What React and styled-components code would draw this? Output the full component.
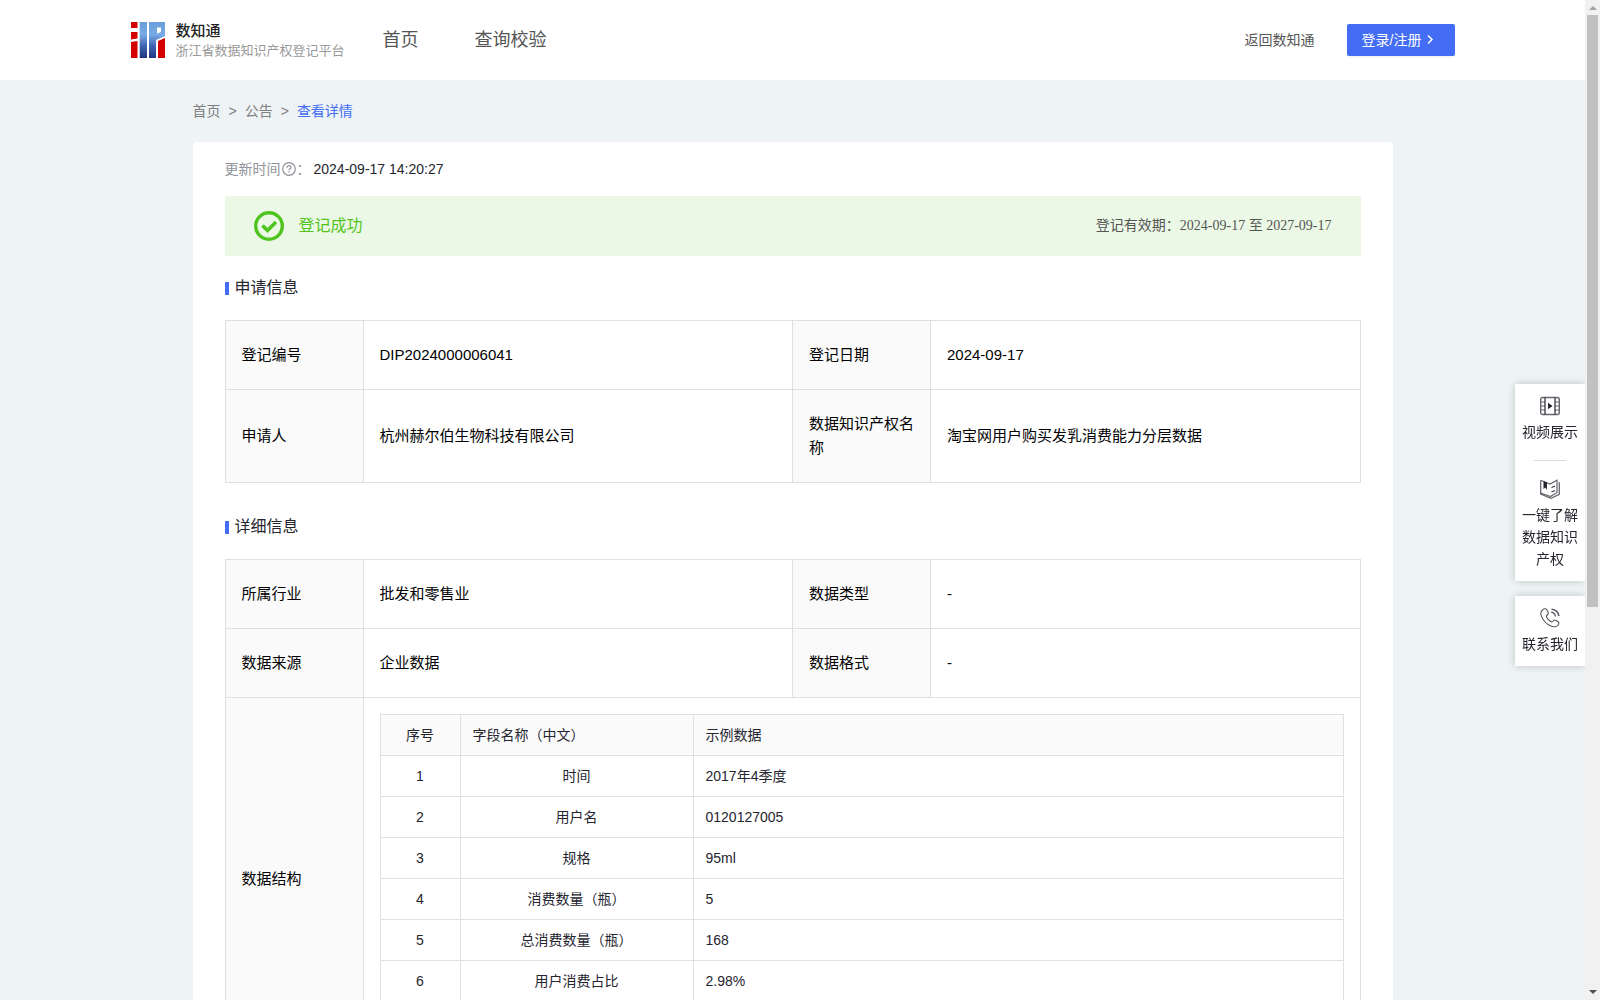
import React from "react";
import styled, { createGlobalStyle } from "styled-components";

const crumbs = ["首页", "公告"];

const applyRows = [
  ["登记编号", "DIP2024000006041", "登记日期", "2024-09-17"],
  ["申请人", "杭州赫尔伯生物科技有限公司", "数据知识产权名称", "淘宝网用户购买发乳消费能力分层数据"],
];

const detailRows = [
  ["所属行业", "批发和零售业", "数据类型", "-"],
  ["数据来源", "企业数据", "数据格式", "-"],
];

const fields = [
  { id: 1, name: "时间", sample: "2017年4季度" },
  { id: 2, name: "用户名", sample: "0120127005" },
  { id: 3, name: "规格", sample: "95ml" },
  { id: 4, name: "消费数量（瓶）", sample: "5" },
  { id: 5, name: "总消费数量（瓶）", sample: "168" },
  { id: 6, name: "用户消费占比", sample: "2.98%" },
];

function Logo() {
  return (
    <svg width="34" height="36" viewBox="0 0 34 36" aria-hidden="true">
      <defs>
        <linearGradient id="logoBlue" x1="0" y1="0" x2="0" y2="36" gradientUnits="userSpaceOnUse">
          <stop offset="0" stopColor="#6a9edb" />
          <stop offset="0.35" stopColor="#78abe4" />
          <stop offset="0.65" stopColor="#3f66b4" />
          <stop offset="1" stopColor="#22347f" />
        </linearGradient>
      </defs>
      <path d="M0 0h6.500v6H0zM0 10h6.500v6.500L0 17.500zM0 20l6.500-1v17H0zM27 19l7-3v20h-7z" fill="#d40000" />
      <path d="M8.700 0h7.300v36H8.700z" fill="url(#logoBlue)" />
      <path
        d="M18 0h16v14l-9 4v18h-7zM26 5.500v6l4-1.500V5.500z"
        fill="url(#logoBlue)"
        fillRule="evenodd"
      />
    </svg>
  );
}

function VideoIcon() {
  return (
    <svg width="20" height="20" viewBox="0 0 20 20" fill="none" stroke="#66666e" aria-hidden="true">
      <rect x="0.700" y="1.500" width="18.600" height="17" rx="2" strokeWidth="1.400" />
      <path d="M.7 6H5M.7 10H5M.7 14H5M15 6h4.300M15 10h4.300M15 14h4.300" strokeWidth="1.200" />
      <path d="M5 1.500v17M15 1.500v17" stroke="#35353e" strokeWidth="1.300" />
      <path d="M8 6.700v6.600l4.600-3.300z" fill="#25252f" stroke="none" />
    </svg>
  );
}

function BookIcon() {
  return (
    <svg width="20" height="20" viewBox="0 0 20 20" fill="none" stroke="#66666e" aria-hidden="true">
      <path d="M.7 1.500v13.500l10.300 4.300 8.300-4V3.200" strokeWidth="1.300" />
      <path d="M.7 1.200l9.300 3.800 7-3.800v12.300l-6.500 4L.7 14" strokeWidth="1.200" />
      <path d="M3.500 2v8l2-1.500 1.500 2.500V3.500z" fill="#25252f" stroke="none" />
      <path d="M11.500 8.500l3.500-1.500M11.500 13l3.500-1.500" stroke="#35353e" strokeWidth="1.200" />
    </svg>
  );
}

function PhoneIcon() {
  return (
    <svg width="20" height="20" viewBox="0 0 20 20" fill="none" stroke="#55555e" strokeLinejoin="round" aria-hidden="true">
      <path
        d="M3.300 1.300c1.500-1 3-.5 3.700.7l1 2c.6 1.300.2 2.300-.8 3-.9.700-1 1.400-.4 2.500 1 1.800 2.200 3 3.900 4 1 .6 1.700.4 2.400-.5.700-1 1.700-1.300 2.900-.6l1.800 1.100c1.200.8 1.400 2.200.4 3.500-1.600 2-4 2.200-6.600 1.200C6.800 16.400 2.800 12.300 1.200 7.600.3 4.900 1 2.700 3.300 1.300z"
        strokeWidth="1.100"
      />
      <path d="M11.200 4.200c2.600.3 4 1.900 4.300 4.300" strokeWidth="1.300" />
      <path d="M11.500 1.200c4.300.3 6.800 2.800 7.300 6.800" strokeWidth="1.600" />
    </svg>
  );
}

function InfoTable({ label, rows, children }) {
  return (
    <Table aria-label={label}>
      <colgroup>
        <LabelCol />
        <col />
        <LabelCol />
        <col />
      </colgroup>
      <tbody>
        {rows.map(([nameA, valueA, nameB, valueB]) => (
          <tr key={nameA}>
            <LabelCell scope="row">{nameA}</LabelCell>
            <ValueCell>{valueA}</ValueCell>
            <LabelCell scope="row">{nameB}</LabelCell>
            <ValueCell>{valueB}</ValueCell>
          </tr>
        ))}
        {children}
      </tbody>
    </Table>
  );
}

function FieldTable() {
  return (
    <Fields>
      <colgroup>
        <FieldCol $width="80px" />
        <FieldCol $width="233px" />
        <col />
      </colgroup>
      <thead>
        <tr>
          <FieldHead $center>序号</FieldHead>
          <FieldHead>字段名称（中文）</FieldHead>
          <FieldHead>示例数据</FieldHead>
        </tr>
      </thead>
      <tbody>
        {fields.map(({ id, name, sample }) => (
          <tr key={id}>
            <FieldCell $center>{id}</FieldCell>
            <FieldCell $center>{name}</FieldCell>
            <FieldCell>{sample}</FieldCell>
          </tr>
        ))}
      </tbody>
    </Fields>
  );
}

function App() {
  return (
    <Shell>
      <GlobalStyle />
      <Page>
        <Header>
          <HeaderInner>
            <Brand href="#">
              <Logo />
              <BrandText>
                <BrandName>数知通</BrandName>
                <BrandSub>浙江省数据知识产权登记平台</BrandSub>
              </BrandText>
            </Brand>
            <Nav>
              <NavLink href="#">首页</NavLink>
              <NavLink href="#">查询校验</NavLink>
            </Nav>
            <BackLink href="#">返回数知通</BackLink>
            <LoginButton type="button">
              登录/注册
              <svg width="14" height="14" viewBox="0 0 14 14" fill="none" stroke="#fff" strokeWidth="1.500" aria-hidden="true">
                <path d="M5 2.500L9 6.500L5 10.500" />
              </svg>
            </LoginButton>
          </HeaderInner>
        </Header>

        <Content>
          <Breadcrumb aria-label="breadcrumb">
            {crumbs.map((crumb) => (
              <React.Fragment key={crumb}>
                <Crumb href="#">{crumb}</Crumb>
                <span>&gt;</span>
              </React.Fragment>
            ))}
            <Crumb href="#" $active>
              查看详情
            </Crumb>
          </Breadcrumb>

          <Card>
            <Updated>
              更新时间
              <svg width="14" height="14" viewBox="0 0 14 14" fill="none" stroke="#909399" strokeWidth="1.200" aria-hidden="true">
                <circle cx="7" cy="7" r="6.300" />
                <path d="M5 5.700c0-1.200.9-2 2-2s2 .8 2 1.800c0 1.300-2 1.300-2 2.800M7 9.300v1.200" />
              </svg>
              <span>：</span>
              <time>2024-09-17 14:20:27</time>
            </Updated>

            <Banner>
              <svg width="30" height="30" viewBox="0 0 30 30" fill="none" stroke="#4fc41f" aria-hidden="true">
                <circle cx="15" cy="15" r="13.300" strokeWidth="3.400" />
                <path d="M8.500 14.500l5 5 8.500-8.500" strokeWidth="3.600" />
              </svg>
              <BannerTitle>登记成功</BannerTitle>
              <Validity>登记有效期：2024-09-17 至 2027-09-17</Validity>
            </Banner>

            <SectionTitle>申请信息</SectionTitle>
            <InfoTable label="申请信息" rows={applyRows} />

            <SectionTitle>详细信息</SectionTitle>
            <InfoTable label="详细信息" rows={detailRows}>
              <tr>
                <LabelCell scope="row">数据结构</LabelCell>
                <NestedCell colSpan={3}>
                  <FieldTable />
                </NestedCell>
              </tr>
            </InfoTable>
          </Card>
        </Content>

        <Dock>
          <DockGroup>
            <DockItem href="#">
              <VideoIcon />
              视频展示
            </DockItem>
            <DockLine />
            <DockItem href="#">
              <BookIcon />
              一键了解数据知识产权
            </DockItem>
          </DockGroup>
          <DockGroup>
            <DockItem href="#">
              <PhoneIcon />
              联系我们
            </DockItem>
          </DockGroup>
        </Dock>
      </Page>

      <ScrollBar aria-hidden="true">
        <ScrollArrow $color="#a3a3a3">
          <path d="M4 10l4-4 4 4z" />
        </ScrollArrow>
        <ScrollTrack>
          <ScrollThumb />
        </ScrollTrack>
        <ScrollArrow $color="#505050">
          <path d="M4 5l4 4 4-4z" />
        </ScrollArrow>
      </ScrollBar>
    </Shell>
  );
}

const GlobalStyle = createGlobalStyle`
  * {
    box-sizing: border-box;
  }

  body {
    margin: 0;
    background: #eef3f6;
    color: #25252f;
    font: 14px/22px "Liberation Sans", "Noto Sans CJK SC", sans-serif;
  }

  a {
    color: inherit;
    text-decoration: none;
  }
`;

const Shell = styled.div`
  display: flex;
  height: 100vh;
  overflow: hidden;
`;

const Page = styled.div`
  flex: 1;
  min-width: 0;
  overflow: hidden;
`;

const Header = styled.header`
  background: #fff;
`;

const HeaderInner = styled.div`
  display: flex;
  align-items: center;
  max-width: 1324px;
  height: 80px;
  margin: 0 auto;
`;

const Brand = styled.a`
  display: flex;
  align-items: center;
  gap: 11px;
`;

const BrandText = styled.div`
  display: flex;
  flex-direction: column;
  padding-top: 1px;
`;

const BrandName = styled.strong`
  color: #222;
  font-size: 15px;
  font-weight: 500;
  line-height: 20px;
`;

const BrandSub = styled.span`
  color: #999;
  font-size: 13px;
  font-weight: 400;
  line-height: 20px;
`;

const Nav = styled.nav`
  display: flex;
  flex: 1;
  gap: 56px;
  margin-left: 38px;
`;

const NavLink = styled.a`
  color: #555;
  font-size: 18px;
  line-height: 24px;
`;

const BackLink = styled.a`
  margin-right: 32px;
  color: #555;
`;

const LoginButton = styled.button`
  display: flex;
  align-items: center;
  width: 108px;
  height: 32px;
  padding: 0 15px;
  gap: 2px;
  border: 0;
  border-radius: 2px;
  background: #446df6;
  box-shadow: 0 2px 0 rgba(0, 0, 0, 0.04);
  color: #fff;
  font: inherit;
  white-space: nowrap;
`;

const Content = styled.main`
  max-width: 1200px;
  margin: 0 auto;
`;

const Breadcrumb = styled.nav`
  display: flex;
  gap: 8px;
  padding: 20px 0;
  color: #808080;
`;

const Crumb = styled.a`
  color: ${({ $active }) => ($active ? "#446df6" : "#808080")};
`;

const Card = styled.section`
  padding: 16px 32px 32px;
  border-radius: 4px;
  background: #fff;
`;

const Updated = styled.div`
  display: flex;
  align-items: center;
  gap: 1px;
  color: #909399;

  time {
    margin-left: 2px;
    color: #25252f;
  }
`;

const Banner = styled.div`
  display: flex;
  align-items: center;
  gap: 15px;
  height: 60px;
  margin-top: 16px;
  padding: 0 29px;
  background: #ebf8e6;
`;

const BannerTitle = styled.span`
  flex: 1;
  color: #52c41a;
  font-size: 16px;
`;

const Validity = styled.span`
  color: #555;
  font-family: "Liberation Serif", "Noto Sans CJK SC", serif;
`;

const SectionTitle = styled.h2`
  display: flex;
  align-items: center;
  gap: 6px;
  margin: 20px 0;
  font-size: 16px;
  font-weight: 400;
  line-height: 24px;

  &::before {
    width: 4px;
    height: 13px;
    background: #446df6;
    content: "";
  }

  table + & {
    margin-top: 32px;
  }
`;

const Table = styled.table`
  width: 100%;
  border-collapse: collapse;
  table-layout: fixed;
  color: #000;
  font-size: 15px;
  line-height: 24px;
`;

const LabelCol = styled.col`
  width: 138px;
`;

const LabelCell = styled.th`
  padding: 22px 16px;
  border: 1px solid #e0e0e0;
  background: #fafafa;
  font-weight: 400;
  text-align: left;
`;

const ValueCell = styled.td`
  padding: 22px 16px;
  border: 1px solid #e0e0e0;
`;

const NestedCell = styled.td`
  height: 362px;
  padding: 16px;
  border: 1px solid #e0e0e0;
  vertical-align: top;
`;

const Fields = styled.table`
  width: 100%;
  border-collapse: collapse;
  table-layout: fixed;
  color: #25252f;
  font-size: 14px;
  line-height: 24px;
`;

const FieldCol = styled.col`
  width: ${({ $width }) => $width};
`;

const FieldCell = styled.td`
  padding: 8px 12px;
  border: 1px solid #e0e0e0;
  text-align: ${({ $center }) => ($center ? "center" : "left")};
`;

const FieldHead = styled(FieldCell).attrs({ as: "th", scope: "col" })`
  background: #fafafa;
  font-weight: 400;
`;

// floats over the page next to the scroll bar
const Dock = styled.aside`
  position: fixed;
  top: 384px;
  right: 15px;
  display: flex;
  flex-direction: column;
  gap: 15px;
  width: 70px;
`;

const DockGroup = styled.div`
  padding: 12px 7px 11px;
  background: #fff;
  box-shadow: 0 0 8px rgba(0, 0, 0, 0.2);
  clip-path: inset(-10px 0 -10px -10px);
`;

const DockItem = styled.a`
  display: flex;
  flex-direction: column;
  align-items: center;
  gap: 5px;
  text-align: center;
`;

const DockLine = styled.hr`
  width: 32px;
  margin: 17px auto 18px;
  border: 0;
  border-top: 1px solid #dcdcdc;
`;

const ScrollBar = styled.div`
  display: flex;
  flex-direction: column;
  width: 15px;
  background: #f1f1f1;
`;

const ScrollArrow = styled.svg.attrs({ viewBox: "0 0 15 15" })`
  width: 15px;
  height: 15px;
  fill: ${({ $color }) => $color};
`;

const ScrollTrack = styled.div`
  flex: 1;
  padding: 0 2px;
`;

const ScrollThumb = styled.div`
  height: 61%;
  background: #c1c1c1;
`;

export default App;
